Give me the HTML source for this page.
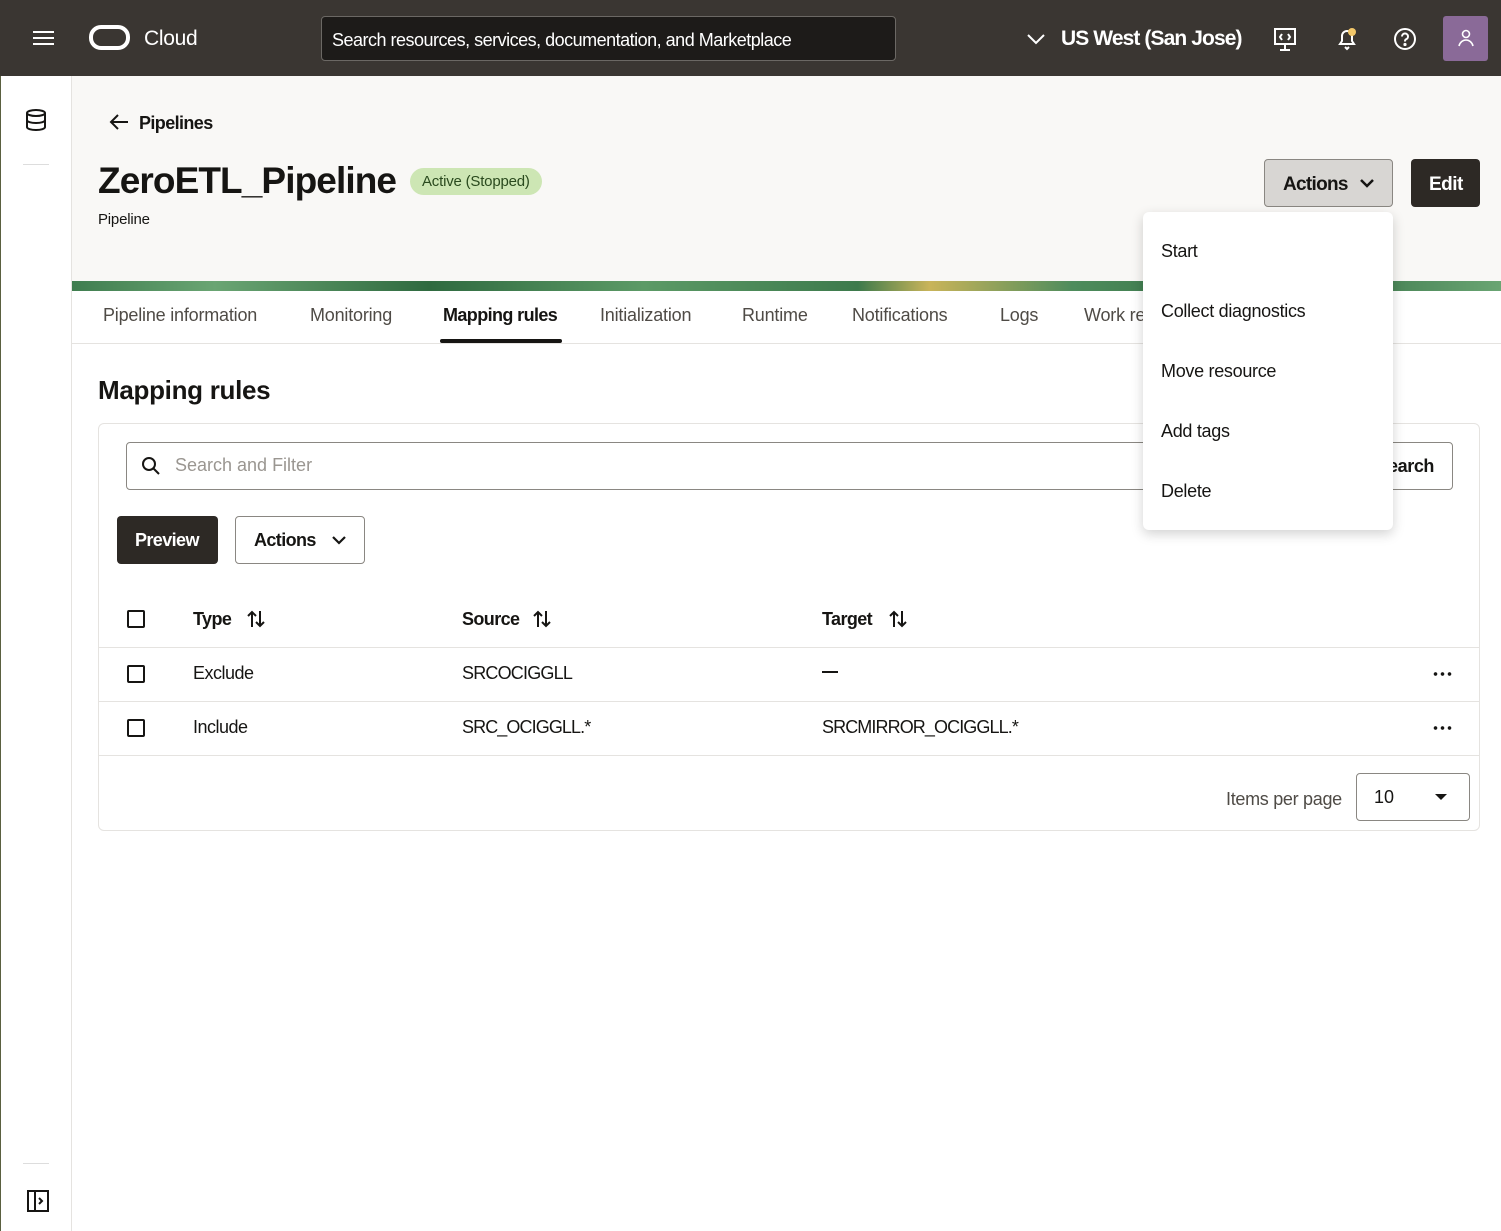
<!DOCTYPE html>
<html><head><meta charset="utf-8"><style>
*{box-sizing:border-box;margin:0;padding:0}
body{width:1501px;height:1231px;position:relative;overflow:hidden;background:#fff;font-family:"Liberation Sans",sans-serif;color:#161513}
.a{position:absolute}
.top{left:0;top:0;width:1501px;height:76px;background:#3a3632}
.t{white-space:nowrap}
.tab{top:305px;font-size:18px;color:#4f4b46;letter-spacing:-0.2px}
.menu div{position:absolute;left:18px;font-size:18px;color:#161513;letter-spacing:-0.3px}
.cb{width:18px;height:18px;border:2px solid #161513;border-radius:2px}
.hr{left:99px;width:1380px;height:1px;background:#e5e3e0}
.dots{width:20px;height:4px;background:radial-gradient(circle,#161513 1.6px,transparent 2px) 0 0/7px 4px repeat-x}
</style></head><body>
<div class="a" style="left:0;top:0;width:1px;height:1231px;background:#5a6040"></div>
<div class="a top"></div>
<div class="a" style="left:33px;top:31px;width:21px;height:2px;background:#fff"></div>
<div class="a" style="left:33px;top:37px;width:21px;height:2px;background:#fff"></div>
<div class="a" style="left:33px;top:43px;width:21px;height:2px;background:#fff"></div>
<div class="a" style="left:89px;top:25px;width:41px;height:25px;border:4px solid #fff;border-radius:12px"></div>
<div class="a t" style="left:144px;top:27px;font-size:21px;color:#fff;letter-spacing:-0.3px">Cloud</div>
<div class="a" style="left:321px;top:16px;width:575px;height:45px;background:#1d1b19;border:1px solid #6b6864;border-radius:4px"></div>
<div class="a t" style="left:332px;top:30px;font-size:18px;color:#fff;letter-spacing:-0.5px">Search resources, services, documentation, and Marketplace</div>
<svg class="a" style="left:1026px;top:32px" width="20" height="14"><path d="M2 3l8 8 8-8" stroke="#fff" stroke-width="2" fill="none"/></svg>
<div class="a t" style="left:1061px;top:27px;font-size:21px;color:#fff;font-weight:bold;letter-spacing:-0.9px">US West (San Jose)</div>
<svg class="a" style="left:1273px;top:27px" width="26" height="26" fill="none" stroke="#fff" stroke-width="2"><rect x="2" y="2" width="20" height="15"/><path d="M12 17v6M7 23h10M9 7l-2 3 2 3M15 7l2 3-2 3"/></svg>
<svg class="a" style="left:1335px;top:26px" width="26" height="26" fill="none" stroke="#fff" stroke-width="2"><path d="M5 18h14l-2-3V10a5 5 0 0 0-10 0v5z M10 21l2 2 2-2"/><circle cx="17" cy="6" r="4" fill="#f2c76a" stroke="none"/></svg>
<svg class="a" style="left:1393px;top:27px" width="24" height="24" fill="none" stroke="#fff" stroke-width="2"><circle cx="12" cy="12" r="10"/><path d="M9 9.5a3 3 0 1 1 4 2.8c-1 .4-1 1-1 2.2"/><circle cx="12" cy="17.5" r="0.6" fill="#fff"/></svg>
<div class="a" style="left:1443px;top:16px;width:45px;height:45px;background:#8a6a98;border-radius:3px"></div>
<svg class="a" style="left:1455px;top:27px" width="22" height="22" fill="none" stroke="#fff" stroke-width="1.6"><circle cx="11" cy="7" r="3.5"/><path d="M4 19c1-4 4-6 7-6s6 2 7 6"/></svg>
<div class="a" style="left:71px;top:76px;width:1px;height:1155px;background:#e5e3e0"></div>
<svg class="a" style="left:24px;top:108px" width="24" height="24" fill="none" stroke="#161513" stroke-width="2"><ellipse cx="12" cy="5" rx="9" ry="3"/><path d="M3 5v14c0 1.7 4 3 9 3s9-1.3 9-3V5M3 12c0 1.7 4 3 9 3s9-1.3 9-3"/></svg>
<div class="a" style="left:23px;top:164px;width:26px;height:1px;background:#ddd"></div>
<div class="a" style="left:23px;top:1163px;width:26px;height:1px;background:#ddd"></div>
<svg class="a" style="left:27px;top:1190px" width="22" height="22" fill="none" stroke="#161513" stroke-width="2"><rect x="1" y="1" width="20" height="20"/><path d="M8 1v20M12 8l3 3-3 3"/></svg>
<div class="a" style="left:72px;top:76px;width:1429px;height:205px;background:#f9f8f6"></div>
<div class="a" style="left:72px;top:281px;width:1429px;height:10px;background:linear-gradient(90deg,#3f7d4f,#6aa573 10%,#2f6a40 25%,#5c9a66 40%,#3d7a4c 55%,#c9b45a 60%,#4e8c5c 70%,#2f6a40 85%,#6aa573)"></div>
<svg class="a" style="left:108px;top:113px" width="22" height="18" fill="none" stroke="#161513" stroke-width="2"><path d="M20 9H3M10 2L3 9l7 7"/></svg>
<div class="a t" style="left:139px;top:113px;font-size:18px;font-weight:bold;letter-spacing:-0.6px">Pipelines</div>
<div class="a t" style="left:98px;top:160px;font-size:37px;font-weight:bold;letter-spacing:-0.9px">ZeroETL_Pipeline</div>
<div class="a t" style="left:410px;top:168px;height:27px;padding:0 12px;background:#cde6b4;border-radius:14px;font-size:15px;line-height:27px;color:#2a4a1e;letter-spacing:-0.2px">Active (Stopped)</div>
<div class="a t" style="left:98px;top:211px;font-size:15px;letter-spacing:-0.2px">Pipeline</div>
<div class="a" style="left:1264px;top:159px;width:129px;height:48px;background:#d8d6d3;border:1px solid #8a8782;border-radius:4px"></div>
<div class="a t" style="left:1283px;top:174px;font-size:19px;font-weight:bold;letter-spacing:-0.7px">Actions</div>
<svg class="a" style="left:1359px;top:177px" width="16" height="12"><path d="M2 3l6 6 6-6" stroke="#161513" stroke-width="2.5" fill="none"/></svg>
<div class="a" style="left:1411px;top:159px;width:69px;height:48px;background:#2d2925;border-radius:4px"></div>
<div class="a t" style="left:1429px;top:174px;font-size:19px;font-weight:bold;color:#fff;letter-spacing:-0.5px">Edit</div>
<div class="a t tab" style="left:103px">Pipeline information</div>
<div class="a t tab" style="left:310px">Monitoring</div>
<div class="a t tab" style="left:443px;color:#161513;font-weight:bold;letter-spacing:-0.6px">Mapping rules</div>
<div class="a" style="left:440px;top:339px;width:122px;height:4px;background:#161513;border-radius:2px"></div>
<div class="a t tab" style="left:600px">Initialization</div>
<div class="a t tab" style="left:742px">Runtime</div>
<div class="a t tab" style="left:852px">Notifications</div>
<div class="a t tab" style="left:1000px">Logs</div>
<div class="a t tab" style="left:1084px">Work re</div>
<div class="a" style="left:72px;top:343px;width:1429px;height:1px;background:#e5e3e0"></div>
<div class="a t" style="left:98px;top:375px;font-size:26px;font-weight:bold;letter-spacing:-0.3px">Mapping rules</div>
<div class="a" style="left:98px;top:423px;width:1382px;height:408px;border:1px solid #e5e3e0;border-radius:6px"></div>
<div class="a" style="left:126px;top:442px;width:1327px;height:48px;border:1px solid #8a8782;border-radius:4px"></div>
<svg class="a" style="left:141px;top:456px" width="20" height="20" fill="none" stroke="#161513" stroke-width="2"><circle cx="8" cy="8" r="6"/><path d="M12.5 12.5L18 18"/></svg>
<div class="a t" style="left:175px;top:455px;font-size:18px;color:#9a9691">Search and Filter</div>
<div class="a t" style="left:1388px;top:456px;font-size:18px;font-weight:bold;letter-spacing:-0.4px">earch</div>
<div class="a" style="left:117px;top:516px;width:101px;height:48px;background:#2d2925;border-radius:4px"></div>
<div class="a t" style="left:135px;top:530px;font-size:18px;font-weight:bold;color:#fff;letter-spacing:-0.6px">Preview</div>
<div class="a" style="left:235px;top:516px;width:130px;height:48px;border:1px solid #8a8782;border-radius:4px"></div>
<div class="a t" style="left:254px;top:530px;font-size:18px;font-weight:bold;letter-spacing:-0.6px">Actions</div>
<svg class="a" style="left:331px;top:534px" width="16" height="12"><path d="M2 3l6 6 6-6" stroke="#161513" stroke-width="2.2" fill="none"/></svg>
<div class="a cb" style="left:127px;top:610px"></div>
<div class="a t" style="left:193px;top:609px;font-size:18px;font-weight:bold;letter-spacing:-0.6px">Type</div>
<div class="a t" style="left:462px;top:609px;font-size:18px;font-weight:bold;letter-spacing:-0.6px">Source</div>
<div class="a t" style="left:822px;top:609px;font-size:18px;font-weight:bold;letter-spacing:-0.6px">Target</div>
<svg class="a" style="left:246px;top:609px" width="20" height="20" fill="none" stroke="#161513" stroke-width="2"><path d="M6 18V3M2 7l4-4 4 4M14 2v15M10 13l4 4 4-4"/></svg>
<svg class="a" style="left:532px;top:609px" width="20" height="20" fill="none" stroke="#161513" stroke-width="2"><path d="M6 18V3M2 7l4-4 4 4M14 2v15M10 13l4 4 4-4"/></svg>
<svg class="a" style="left:888px;top:609px" width="20" height="20" fill="none" stroke="#161513" stroke-width="2"><path d="M6 18V3M2 7l4-4 4 4M14 2v15M10 13l4 4 4-4"/></svg>
<div class="a hr" style="top:647px"></div>
<div class="a cb" style="left:127px;top:665px"></div>
<div class="a t" style="left:193px;top:663px;font-size:18px;letter-spacing:-0.5px">Exclude</div>
<div class="a t" style="left:462px;top:663px;font-size:18px;letter-spacing:-0.8px">SRCOCIGGLL</div>
<div class="a" style="left:822px;top:671px;width:16px;height:2px;background:#161513"></div>
<div class="a dots" style="left:1432px;top:672px"></div>
<div class="a hr" style="top:701px"></div>
<div class="a cb" style="left:127px;top:719px"></div>
<div class="a t" style="left:193px;top:717px;font-size:18px;letter-spacing:-0.5px">Include</div>
<div class="a t" style="left:462px;top:717px;font-size:18px;letter-spacing:-0.9px">SRC_OCIGGLL.*</div>
<div class="a t" style="left:822px;top:717px;font-size:18px;letter-spacing:-0.9px">SRCMIRROR_OCIGGLL.*</div>
<div class="a dots" style="left:1432px;top:726px"></div>
<div class="a hr" style="top:755px"></div>
<div class="a t" style="left:1226px;top:789px;font-size:18px;color:#4f4b46;letter-spacing:-0.3px">Items per page</div>
<div class="a" style="left:1356px;top:773px;width:114px;height:48px;border:1px solid #8a8782;border-radius:4px"></div>
<div class="a t" style="left:1374px;top:787px;font-size:18px">10</div>
<svg class="a" style="left:1434px;top:793px" width="14" height="8"><path d="M1 1h12L7 7z" fill="#161513"/></svg>
<div class="a menu" style="left:1143px;top:212px;width:250px;height:318px;background:#fff;border-radius:6px;box-shadow:0 4px 12px rgba(0,0,0,0.18)">
<div style="top:29px">Start</div>
<div style="top:89px">Collect diagnostics</div>
<div style="top:149px">Move resource</div>
<div style="top:209px">Add tags</div>
<div style="top:269px">Delete</div>
</div>
</body></html>
